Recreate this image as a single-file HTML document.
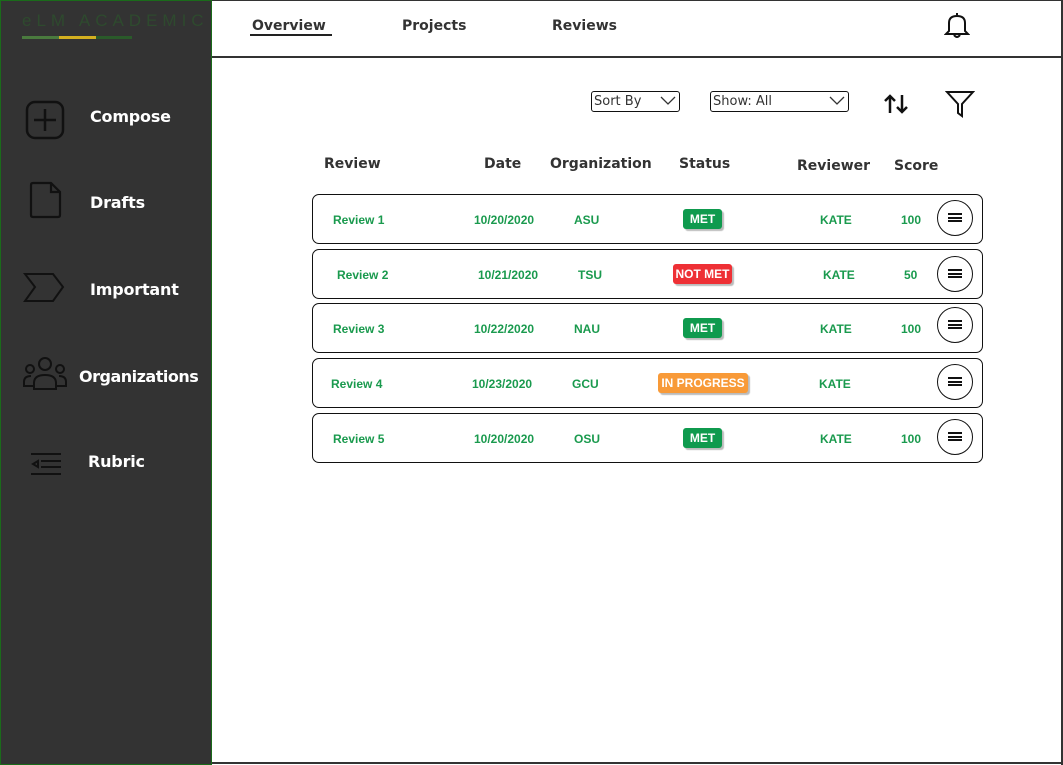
<!DOCTYPE html>
<html><head><meta charset="utf-8"><style>
*{margin:0;padding:0;box-sizing:border-box}
body{width:1063px;height:765px;position:relative;background:#fff;font-family:"Liberation Sans",sans-serif;overflow:hidden}
.a{position:absolute;white-space:nowrap}
#side{position:absolute;left:0;top:0;width:212px;height:765px;background:#333;border:1px solid #1a6b1a;overflow:hidden}
.nav{font-family:"DejaVu Sans",sans-serif;font-weight:bold;color:#fff;font-size:16px;letter-spacing:-0.2px}
.tab{font-family:"DejaVu Sans",sans-serif;font-weight:bold;color:#333;font-size:14px}
.hd{font-family:"DejaVu Sans",sans-serif;font-weight:bold;color:#333;font-size:14px}
.row{position:absolute;left:312px;width:671px;height:50px;border:1.3px solid #111;border-radius:7px}
.g{position:absolute;color:#1a9a4e;font-weight:bold;font-size:12px;white-space:nowrap}
.b{position:absolute;color:#fff;font-weight:bold;font-size:12px;height:20px;line-height:20px;text-align:center;border-radius:3px;box-shadow:2px 2px 1px #bbb}
.c{position:absolute;width:36px;height:36px;border:1.5px solid #111;border-radius:50%}
.c i{position:absolute;left:10px;width:14px;height:2px;background:#111}
.sel{position:absolute;border:1px solid #111;border-radius:3px;height:21px;font-family:"DejaVu Sans",sans-serif;font-size:13px;color:#333;padding-left:2px;line-height:19px}
</style></head><body>
<div id="side">
<div class="a" style="left:21px;top:10px;font-size:17px;letter-spacing:5px;color:#2e4a2e">eLM ACADEMIC</div>
<div class="a" style="left:21px;top:35px;width:37px;height:3px;background:#4a7a3e"></div>
<div class="a" style="left:58px;top:35px;width:37px;height:3px;background:#d4b020"></div>
<div class="a" style="left:95px;top:35px;width:36px;height:3px;background:#2a5a2a"></div>
<svg class="a" style="left:24px;top:99px" width="40" height="40" viewBox="0 0 40 40" fill="none" stroke="#111" stroke-width="2.5"><rect x="2" y="2" width="36" height="36" rx="8"/><path d="M20 9V31M9 20H31"/></svg>
<div class="a nav" style="left:89px;top:106px">Compose</div>
<svg class="a" style="left:28px;top:180px" width="34" height="38" viewBox="0 0 34 38" fill="none" stroke="#111" stroke-width="2.2"><path d="M4 2H22L31 11V34Q31 36 29 36H4Q2 36 2 34V4Q2 2 4 2Z"/><path d="M22 2V11H31"/></svg>
<div class="a nav" style="left:89px;top:192px">Drafts</div>
<svg class="a" style="left:22px;top:271px" width="43" height="32" viewBox="0 0 43 32" fill="none" stroke="#111" stroke-width="2"><path d="M2 2H30L40 15L30 29H2L12 15Z"/></svg>
<div class="a nav" style="left:89px;top:279px">Important</div>
<svg class="a" style="left:21px;top:355px" width="46" height="36" viewBox="0 0 46 36" fill="none" stroke="#111" stroke-width="2"><circle cx="23" cy="8" r="6"/><circle cx="8" cy="13" r="4"/><circle cx="38" cy="13" r="4"/><path d="M12 33V27Q12 19 23 19Q34 19 34 27V33Z"/><path d="M11 30H2V26Q2 20 9 20"/><path d="M35 30H44V26Q44 20 37 20"/></svg>
<div class="a nav" style="left:78px;top:366px;letter-spacing:-0.5px">Organizations</div>
<svg class="a" style="left:28px;top:451px" width="34" height="24" viewBox="0 0 34 24" fill="none" stroke="#111" stroke-width="2"><path d="M2 2H32M12 9H32M12 15H32M2 22H32"/><path d="M9 9L4 12L9 15Z"/></svg>
<div class="a nav" style="left:87px;top:451px">Rubric</div>
</div>
<div class="a" style="left:212px;top:56px;width:851px;height:2px;background:#333"></div>
<div class="a" style="left:1061px;top:0;width:2px;height:765px;background:#333"></div>
<div class="a" style="left:212px;top:762px;width:851px;height:2px;background:#333"></div>
<div class="a" style="left:212px;top:0;width:851px;height:1px;background:#333"></div>
<div class="a tab" style="left:252px;top:18px">Overview</div>
<div class="a" style="left:250px;top:34px;width:82px;height:2px;background:#222"></div>
<div class="a tab" style="left:402px;top:18px">Projects</div>
<div class="a tab" style="left:552px;top:18px">Reviews</div>
<svg class="a" style="left:944px;top:11px" width="26" height="28" viewBox="0 0 26 28" fill="none" stroke="#111" stroke-width="2"><path d="M13 2V4M5 20V12Q5 5 13 5Q21 5 21 12V20L24 23H2Z"/><path d="M10 24Q13 28 16 24"/></svg>
<div class="sel" style="left:591px;top:91px;width:89px">Sort By<svg style="position:absolute;right:3px;top:4px" width="16" height="10" viewBox="0 0 16 10" fill="none" stroke="#333" stroke-width="1.3"><path d="M1 1L8 8L15 1"/></svg></div>
<div class="sel" style="left:710px;top:91px;width:139px">Show: All<svg style="position:absolute;right:3px;top:4px" width="16" height="10" viewBox="0 0 16 10" fill="none" stroke="#333" stroke-width="1.3"><path d="M1 1L8 8L15 1"/></svg></div>
<svg class="a" style="left:882px;top:93px" width="28" height="22" viewBox="0 0 28 22" fill="none" stroke="#111" stroke-width="2.5"><path d="M8 20V3M3 8L8 3L13 8M20 2V19M15 14L20 19L25 14"/></svg>
<svg class="a" style="left:945px;top:90px" width="30" height="28" viewBox="0 0 30 28" fill="none" stroke="#111" stroke-width="2"><path d="M2 2H28L17 14V26L13 23V14Z"/></svg>
<div class="a hd" style="left:324px;top:156px">Review</div>
<div class="a hd" style="left:484px;top:156px">Date</div>
<div class="a hd" style="left:550px;top:156px">Organization</div>
<div class="a hd" style="left:679px;top:156px">Status</div>
<div class="a hd" style="left:797px;top:158px">Reviewer</div>
<div class="a hd" style="left:894px;top:158px">Score</div>

<div class="row" style="top:194px"></div>
<div class="g" style="left:333px;top:213px">Review 1</div><div class="g" style="left:474px;top:213px">10/20/2020</div><div class="g" style="left:574px;top:213px">ASU</div>
<div class="b" style="left:683px;top:209px;width:39px;background:#0f9a4e">MET</div>
<div class="g" style="left:820px;top:213px">KATE</div><div class="g" style="left:901px;top:213px">100</div>
<div class="c" style="left:937px;top:200px"><i style="top:12px"></i><i style="top:15.5px"></i><i style="top:19px"></i></div>

<div class="row" style="top:249px"></div>
<div class="g" style="left:337px;top:268px">Review 2</div><div class="g" style="left:478px;top:268px">10/21/2020</div><div class="g" style="left:578px;top:268px">TSU</div>
<div class="b" style="left:673px;top:264px;width:59px;background:#ee3035">NOT MET</div>
<div class="g" style="left:823px;top:268px">KATE</div><div class="g" style="left:904px;top:268px">50</div>
<div class="c" style="left:937px;top:256px"><i style="top:12px"></i><i style="top:15.5px"></i><i style="top:19px"></i></div>

<div class="row" style="top:303px"></div>
<div class="g" style="left:333px;top:322px">Review 3</div><div class="g" style="left:474px;top:322px">10/22/2020</div><div class="g" style="left:574px;top:322px">NAU</div>
<div class="b" style="left:683px;top:318px;width:39px;background:#0f9a4e">MET</div>
<div class="g" style="left:820px;top:322px">KATE</div><div class="g" style="left:901px;top:322px">100</div>
<div class="c" style="left:937px;top:307px"><i style="top:12px"></i><i style="top:15.5px"></i><i style="top:19px"></i></div>

<div class="row" style="top:358px"></div>
<div class="g" style="left:331px;top:377px">Review 4</div><div class="g" style="left:472px;top:377px">10/23/2020</div><div class="g" style="left:572px;top:377px">GCU</div>
<div class="b" style="left:658px;top:373px;width:90px;background:#f89a38">IN PROGRESS</div>
<div class="g" style="left:819px;top:377px">KATE</div>
<div class="c" style="left:937px;top:364px"><i style="top:12px"></i><i style="top:15.5px"></i><i style="top:19px"></i></div>

<div class="row" style="top:413px"></div>
<div class="g" style="left:333px;top:432px">Review 5</div><div class="g" style="left:474px;top:432px">10/20/2020</div><div class="g" style="left:574px;top:432px">OSU</div>
<div class="b" style="left:683px;top:428px;width:39px;background:#0f9a4e">MET</div>
<div class="g" style="left:820px;top:432px">KATE</div><div class="g" style="left:901px;top:432px">100</div>
<div class="c" style="left:937px;top:419px"><i style="top:12px"></i><i style="top:15.5px"></i><i style="top:19px"></i></div>
</body></html>
